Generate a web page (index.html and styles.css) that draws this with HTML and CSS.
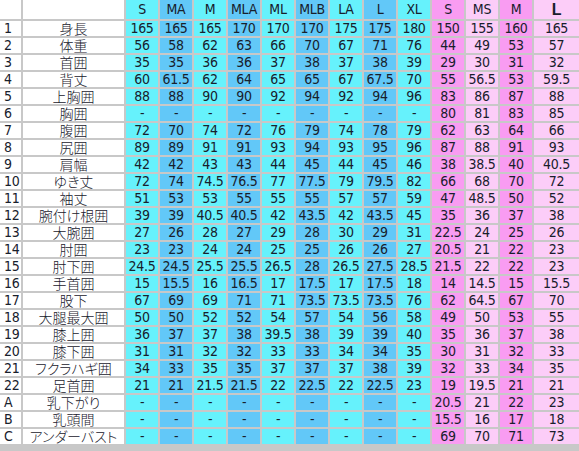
FILE: index.html
```html
<!DOCTYPE html>
<html lang="ja">
<head>
<meta charset="utf-8">
<title>サイズ表</title>
<link rel="stylesheet" href="styles.css">
</head>
<body>
<div class="sheet">
  <div class="idx"></div><div class="lbl"></div>
  <div class="c hd">S</div><div class="b hd">MA</div><div class="c hd">M</div><div class="b hd">MLA</div><div class="c hd">ML</div><div class="b hd">MLB</div><div class="c hd">LA</div><div class="b hd">L</div><div class="c hd">XL</div><div class="p hd">S</div><div class="q hd">MS</div><div class="p hd">M</div><div class="q hd big">L</div>

  <div class="idx">1</div><div class="lbl">身長</div>
  <div class="c">165</div><div class="b">165</div><div class="c">165</div><div class="b">170</div><div class="c">170</div><div class="b">170</div><div class="c">175</div><div class="b">175</div><div class="c">180</div><div class="p">150</div><div class="q">155</div><div class="p">160</div><div class="q">165</div>

  <div class="idx">2</div><div class="lbl">体重</div>
  <div class="c">56</div><div class="b">58</div><div class="c">62</div><div class="b">63</div><div class="c">66</div><div class="b">70</div><div class="c">67</div><div class="b">71</div><div class="c">76</div><div class="p">44</div><div class="q">49</div><div class="p">53</div><div class="q">57</div>

  <div class="idx">3</div><div class="lbl">首囲</div>
  <div class="c">35</div><div class="b">35</div><div class="c">36</div><div class="b">36</div><div class="c">37</div><div class="b">38</div><div class="c">37</div><div class="b">38</div><div class="c">39</div><div class="p">29</div><div class="q">30</div><div class="p">31</div><div class="q">32</div>

  <div class="idx">4</div><div class="lbl">背丈</div>
  <div class="c">60</div><div class="b">61.5</div><div class="c">62</div><div class="b">64</div><div class="c">65</div><div class="b">65</div><div class="c">67</div><div class="b">67.5</div><div class="c">70</div><div class="p">55</div><div class="q">56.5</div><div class="p">53</div><div class="q">59.5</div>

  <div class="idx">5</div><div class="lbl">上胸囲</div>
  <div class="c">88</div><div class="b">88</div><div class="c">90</div><div class="b">90</div><div class="c">92</div><div class="b">94</div><div class="c">92</div><div class="b">94</div><div class="c">96</div><div class="p">83</div><div class="q">86</div><div class="p">87</div><div class="q">88</div>

  <div class="idx">6</div><div class="lbl">胸囲</div>
  <div class="c">-</div><div class="b">-</div><div class="c">-</div><div class="b">-</div><div class="c">-</div><div class="b">-</div><div class="c">-</div><div class="b">-</div><div class="c">-</div><div class="p">80</div><div class="q">81</div><div class="p">83</div><div class="q">85</div>

  <div class="idx">7</div><div class="lbl">腹囲</div>
  <div class="c">72</div><div class="b">70</div><div class="c">74</div><div class="b">72</div><div class="c">76</div><div class="b">79</div><div class="c">74</div><div class="b">78</div><div class="c">79</div><div class="p">62</div><div class="q">63</div><div class="p">64</div><div class="q">66</div>

  <div class="idx">8</div><div class="lbl">尻囲</div>
  <div class="c">89</div><div class="b">89</div><div class="c">91</div><div class="b">91</div><div class="c">93</div><div class="b">94</div><div class="c">93</div><div class="b">95</div><div class="c">96</div><div class="p">87</div><div class="q">88</div><div class="p">91</div><div class="q">93</div>

  <div class="idx">9</div><div class="lbl">肩幅</div>
  <div class="c">42</div><div class="b">42</div><div class="c">43</div><div class="b">43</div><div class="c">44</div><div class="b">45</div><div class="c">44</div><div class="b">45</div><div class="c">46</div><div class="p">38</div><div class="q">38.5</div><div class="p">40</div><div class="q">40.5</div>

  <div class="idx">10</div><div class="lbl">ゆき丈</div>
  <div class="c">72</div><div class="b">74</div><div class="c">74.5</div><div class="b">76.5</div><div class="c">77</div><div class="b">77.5</div><div class="c">79</div><div class="b">79.5</div><div class="c">82</div><div class="p">66</div><div class="q">68</div><div class="p">70</div><div class="q">72</div>

  <div class="idx">11</div><div class="lbl">袖丈</div>
  <div class="c">51</div><div class="b">53</div><div class="c">53</div><div class="b">55</div><div class="c">55</div><div class="b">55</div><div class="c">57</div><div class="b">57</div><div class="c">59</div><div class="p">47</div><div class="q">48.5</div><div class="p">50</div><div class="q">52</div>

  <div class="idx">12</div><div class="lbl">腕付け根囲</div>
  <div class="c">39</div><div class="b">39</div><div class="c">40.5</div><div class="b">40.5</div><div class="c">42</div><div class="b">43.5</div><div class="c">42</div><div class="b">43.5</div><div class="c">45</div><div class="p">35</div><div class="q">36</div><div class="p">37</div><div class="q">38</div>

  <div class="idx">13</div><div class="lbl">大腕囲</div>
  <div class="c">27</div><div class="b">26</div><div class="c">28</div><div class="b">27</div><div class="c">29</div><div class="b">28</div><div class="c">30</div><div class="b">29</div><div class="c">31</div><div class="p">22.5</div><div class="q">24</div><div class="p">25</div><div class="q">26</div>

  <div class="idx">14</div><div class="lbl">肘囲</div>
  <div class="c">23</div><div class="b">23</div><div class="c">24</div><div class="b">24</div><div class="c">25</div><div class="b">25</div><div class="c">26</div><div class="b">26</div><div class="c">27</div><div class="p">20.5</div><div class="q">21</div><div class="p">22</div><div class="q">23</div>

  <div class="idx">15</div><div class="lbl">肘下囲</div>
  <div class="c">24.5</div><div class="b">24.5</div><div class="c">25.5</div><div class="b">25.5</div><div class="c">26.5</div><div class="b">28</div><div class="c">26.5</div><div class="b">27.5</div><div class="c">28.5</div><div class="p">21.5</div><div class="q">22</div><div class="p">22</div><div class="q">23</div>

  <div class="idx">16</div><div class="lbl">手首囲</div>
  <div class="c">15</div><div class="b">15.5</div><div class="c">16</div><div class="b">16.5</div><div class="c">17</div><div class="b">17.5</div><div class="c">17</div><div class="b">17.5</div><div class="c">18</div><div class="p">14</div><div class="q">14.5</div><div class="p">15</div><div class="q">15.5</div>

  <div class="idx">17</div><div class="lbl">股下</div>
  <div class="c">67</div><div class="b">69</div><div class="c">69</div><div class="b">71</div><div class="c">71</div><div class="b">73.5</div><div class="c">73.5</div><div class="b">73.5</div><div class="c">76</div><div class="p">62</div><div class="q">64.5</div><div class="p">67</div><div class="q">70</div>

  <div class="idx">18</div><div class="lbl">大腿最大囲</div>
  <div class="c">50</div><div class="b">50</div><div class="c">52</div><div class="b">52</div><div class="c">54</div><div class="b">57</div><div class="c">54</div><div class="b">56</div><div class="c">58</div><div class="p">49</div><div class="q">50</div><div class="p">53</div><div class="q">55</div>

  <div class="idx">19</div><div class="lbl">膝上囲</div>
  <div class="c">36</div><div class="b">37</div><div class="c">37</div><div class="b">38</div><div class="c">39.5</div><div class="b">38</div><div class="c">39</div><div class="b">39</div><div class="c">40</div><div class="p">35</div><div class="q">36</div><div class="p">37</div><div class="q">38</div>

  <div class="idx">20</div><div class="lbl">膝下囲</div>
  <div class="c">31</div><div class="b">31</div><div class="c">32</div><div class="b">32</div><div class="c">33</div><div class="b">33</div><div class="c">34</div><div class="b">34</div><div class="c">35</div><div class="p">30</div><div class="q">31</div><div class="p">32</div><div class="q">33</div>

  <div class="idx">21</div><div class="lbl">フクラハギ囲</div>
  <div class="c">34</div><div class="b">33</div><div class="c">35</div><div class="b">35</div><div class="c">37</div><div class="b">37</div><div class="c">37</div><div class="b">38</div><div class="c">39</div><div class="p">32</div><div class="q">33</div><div class="p">34</div><div class="q">35</div>

  <div class="idx">22</div><div class="lbl">足首囲</div>
  <div class="c">21</div><div class="b">21</div><div class="c">21.5</div><div class="b">21.5</div><div class="c">22</div><div class="b">22.5</div><div class="c">22</div><div class="b">22.5</div><div class="c">23</div><div class="p">19</div><div class="q">19.5</div><div class="p">21</div><div class="q">21</div>

  <div class="idx">A</div><div class="lbl">乳下がり</div>
  <div class="c">-</div><div class="b">-</div><div class="c">-</div><div class="b">-</div><div class="c">-</div><div class="b">-</div><div class="c">-</div><div class="b">-</div><div class="c">-</div><div class="p">20.5</div><div class="q">21</div><div class="p">22</div><div class="q">23</div>

  <div class="idx">B</div><div class="lbl">乳頭間</div>
  <div class="c">-</div><div class="b">-</div><div class="c">-</div><div class="b">-</div><div class="c">-</div><div class="b">-</div><div class="c">-</div><div class="b">-</div><div class="c">-</div><div class="p">15.5</div><div class="q">16</div><div class="p">17</div><div class="q">18</div>

  <div class="idx">C</div><div class="lbl">アンダーバスト</div>
  <div class="c">-</div><div class="b">-</div><div class="c">-</div><div class="b">-</div><div class="c">-</div><div class="b">-</div><div class="c">-</div><div class="b">-</div><div class="c">-</div><div class="p">69</div><div class="q">70</div><div class="p">71</div><div class="q">73</div>
</div>
</body>
</html>
```

FILE: styles.css
```css
html, body {
  margin: 0;
  padding: 0;
  background: #c8c8c8;
}
body {
  width: 579px;
  height: 451px;
  overflow: hidden;
  font-family: "DejaVu Sans Condensed", "DejaVu Sans", sans-serif;
  font-stretch: condensed;
  font-size: 14px;
  letter-spacing: -0.3px;
  color: #18202c;
}
.sheet {
  display: grid;
  grid-template-columns: 21px 101px repeat(12, 32px) 1fr;
  grid-template-rows: 19px;
  grid-auto-rows: 15px;
  column-gap: 2px;
  row-gap: 2px;
  background: #c8c8c8;
}
.sheet > div {
  display: flex;
  align-items: center;
  justify-content: center;
  line-height: 15px;
  height: 100%;
  white-space: nowrap;
}
.idx {
  background: #fff;
  justify-content: flex-start !important;
  padding-left: 4px;
}
.lbl {
  background: #fff;
  font-family: "Noto Sans CJK JP", sans-serif;
  font-weight: 300;
  font-size: 14px;
  letter-spacing: 0;
  font-feature-settings: "palt";
}
.c { background: #66f2fc; }
.b { background: #62c8f8; }
.p { background: #f99cf2; }
.q { background: #fccdf8; }
.big { font-family: "Liberation Sans", sans-serif; font-weight: 700; font-size: 16px; }
```
